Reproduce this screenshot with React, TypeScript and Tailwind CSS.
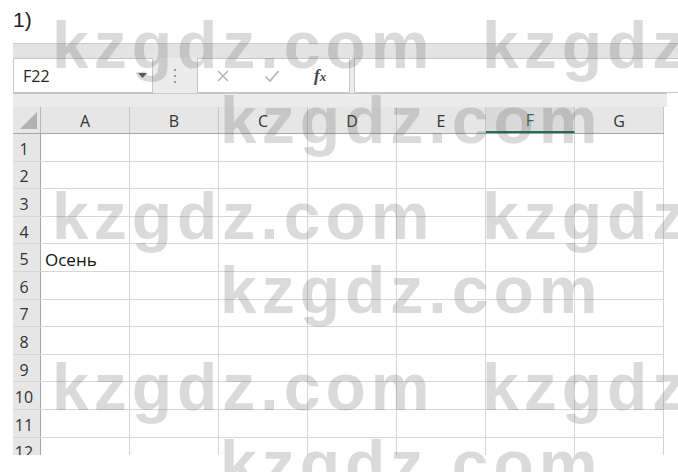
import React from 'react';

const columns = ['A', 'B', 'C', 'D', 'E', 'F', 'G'];
const rows = Array.from({ length: 12 }, (_, i) => i + 1);

// watermark lines: top offset + left offsets of each copy
const marks: { top: string; lefts: string[]; text: string[] }[] = [
  { top: 'top-[12px]', lefts: ['left-[52px]', 'left-[482px]'], text: ['kzgdz.com', 'kzgdz'] },
  { top: 'top-[87px]', lefts: ['left-[220px]'], text: ['kzgdz.com'] },
  { top: 'top-[183px]', lefts: ['left-[52px]', 'left-[482px]'], text: ['kzgdz.com', 'kzgdz'] },
  { top: 'top-[257px]', lefts: ['left-[220px]'], text: ['kzgdz.com'] },
  { top: 'top-[354px]', lefts: ['left-[52px]', 'left-[482px]'], text: ['kzgdz.com', 'kzgdz'] },
  { top: 'top-[431px]', lefts: ['left-[220px]'], text: ['kzgdz.com'] },
];

const Watermark: React.FC = () => (
  <div className="pointer-events-none absolute inset-0 select-none">
    {marks.map((line, i) =>
      line.lefts.map((left, j) => (
        <span
          key={`${i}-${j}`}
          className={`absolute ${line.top} ${left} whitespace-nowrap font-['Liberation_Sans',Arial,sans-serif] text-[66px] font-bold leading-none tracking-[5px] text-[rgba(80,80,80,0.21)]`}
        >
          {line.text[j]}
        </span>
      ))
    )}
  </div>
);

const FormulaBar: React.FC = () => (
  <div className="flex h-[35px] w-[665px] bg-[#ececec]">
    {/* name box */}
    <div className="flex w-[140px] items-center justify-between border border-[#c6c6c6] bg-white pl-[9px] pr-[5px]">
      <span className="text-[16px] text-[#262626]">F22</span>
      <svg width="9" height="6" viewBox="0 0 9 6">
        <path d="M0 0 L9 0 L4.5 5 Z" fill="#5a5a5a" />
      </svg>
    </div>
    <div className="flex w-[44px] flex-col items-center justify-center gap-[4px]">
      <span className="h-[2px] w-[2px] bg-[#9a9a9a]" />
      <span className="h-[2px] w-[2px] bg-[#9a9a9a]" />
      <span className="h-[2px] w-[2px] bg-[#9a9a9a]" />
    </div>
    {/* cancel / enter / fx */}
    <div className="flex w-[153px] items-center border border-[#c6c6c6] bg-white">
      <svg className="ml-[18px]" width="14" height="14" viewBox="0 0 14 14">
        <path d="M2 2 L12 12 M12 2 L2 12" stroke="#b3b3b3" strokeWidth="1.4" fill="none" />
      </svg>
      <svg className="ml-[34px]" width="16" height="14" viewBox="0 0 16 14">
        <path d="M1.5 7.5 L6 12 L14.5 2" stroke="#b3b3b3" strokeWidth="1.6" fill="none" />
      </svg>
      <span className="ml-[34px] font-['Liberation_Serif',serif] text-[17px] font-bold italic text-[#444]">
        f<span className="text-[13px]">x</span>
      </span>
    </div>
    <div className="w-[4px]" />
    <div className="flex-1 border-y border-l border-[#c6c6c6] bg-white" />
  </div>
);

const HeaderRow: React.FC = () => (
  <div className="flex h-[27px] w-[651px] border-b border-[#a6a6a6] bg-[#e6e6e6]">
    <div className="flex w-[28px] items-end justify-end border-r border-[#b8b8b8] pb-[4px] pr-[3px]">
      <svg width="17" height="17" viewBox="0 0 17 17">
        <path d="M17 0 L17 17 L0 17 Z" fill="#b1b1b1" />
      </svg>
    </div>
    {columns.map(c => (
      <div
        key={c}
        className={
          c === 'F'
            ? 'flex w-[89px] items-center justify-center border-r border-[#c6c6c6] border-b-2 border-b-[#217346] bg-[#dadada] pt-[2px] text-[16px] text-[#3c6a50]'
            : 'flex w-[89px] items-center justify-center border-r border-[#c6c6c6] pt-[2px] text-[16px] text-[#333]'
        }
      >
        {c}
      </div>
    ))}
  </div>
);

const App: React.FC = () => {
  return (
    <div className="relative h-[472px] w-[678px] overflow-hidden bg-white font-['Open_Sans','Noto_Sans',sans-serif]">
      <div className="h-[43px] pl-[13px] pt-[8px] font-['Liberation_Sans',Arial,sans-serif] text-[21px] leading-[24px] text-[#222]">
        1)
      </div>

      <div className="ml-[13px]">
        <div className="h-[15px] w-[665px] border-t border-[#cdcdcd] bg-[#e3e3e3]" />
        <FormulaBar />
        <div className="h-[14px] w-[654px] border-t border-[#c8c8c8] bg-[#ebebeb]" />
        <HeaderRow />

        <div className="h-[321px] w-[651px] overflow-hidden">
          {rows.map(r => (
            <div key={r} className="flex h-[27.6px] border-b border-[#d6d6d6]">
              <div className="flex w-[28px] items-center justify-center border-r border-[#a6a6a6] bg-[#e6e6e6] pr-[5px] pt-[3px] text-[16px] text-[#333]">
                {r}
              </div>
              {columns.map(c => (
                <div key={c} className="flex w-[89px] items-center border-r border-[#d6d6d6] pl-[4px] pt-[4px] text-[17px] text-[#111]">
                  {r === 5 && c === 'A' ? 'Осень' : ''}
                </div>
              ))}
            </div>
          ))}
        </div>
      </div>

      <Watermark />
    </div>
  );
};

export default App;
